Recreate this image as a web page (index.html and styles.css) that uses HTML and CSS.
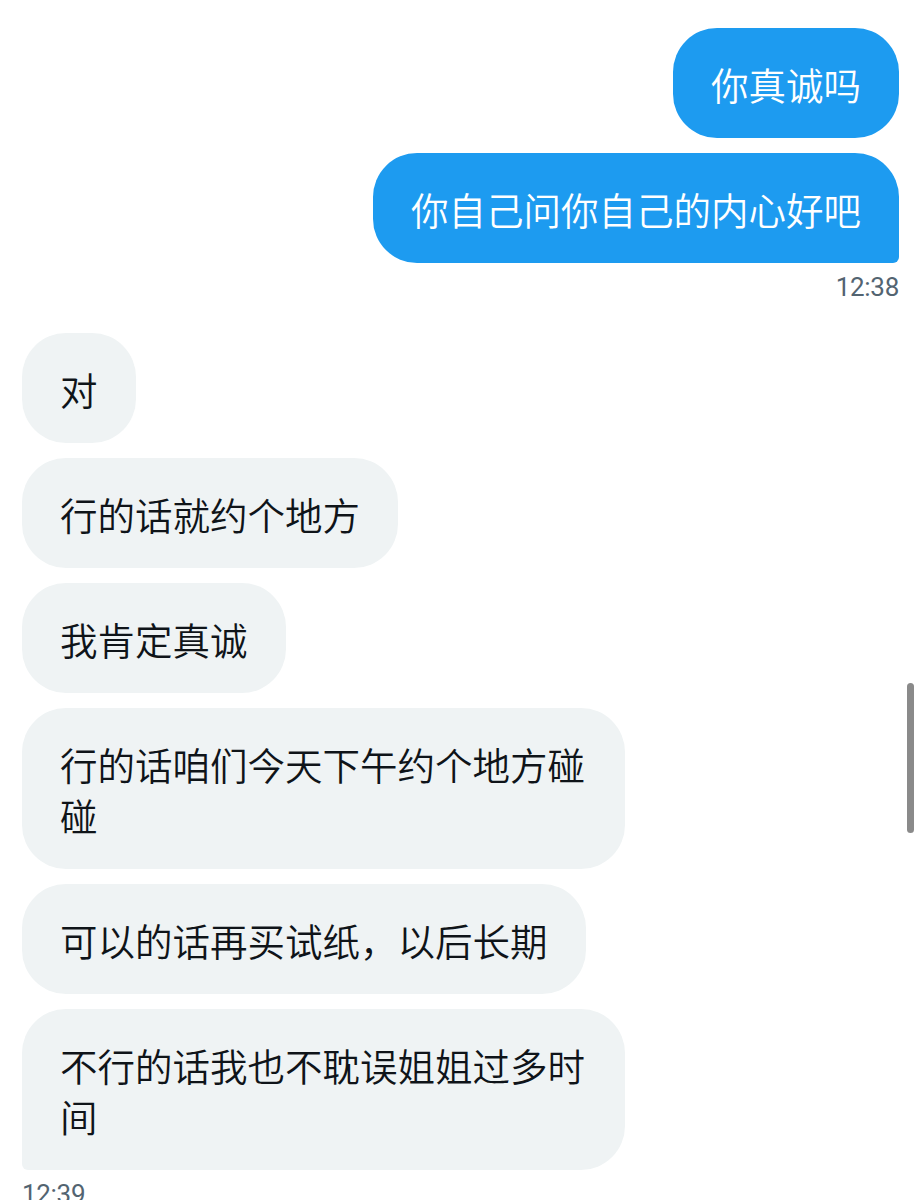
FILE: index.html
```html
<!DOCTYPE html>
<html>
	<head>
		<meta charset="UTF-8">
		<title>私信</title>
		<link rel="stylesheet" href="styles.css">
	</head>
	<body>
		<div class="chat">
			<div class="group out">
				<div class="bubble">你真诚吗</div>
				<div class="bubble">你自己问你自己的内心好吧</div>
				<div class="time">12:38</div>
			</div>
			<div class="group in">
				<div class="bubble">对</div>
				<div class="bubble">行的话就约个地方</div>
				<div class="bubble">我肯定真诚</div>
				<div class="bubble">行的话咱们今天下午约个地方碰碰</div>
				<div class="bubble">可以的话再买试纸，以后长期</div>
				<div class="bubble">不行的话我也不耽误姐姐过多时间</div>
				<div class="time">12:39</div>
			</div>
		</div>
		<div class="scrollbar"></div>
	</body>
</html>
```

FILE: styles.css
```css
*{
	margin:0;
	padding:0;
	box-sizing:border-box;
}
body{
	background:#fff;
	font-family:"Noto Sans CJK SC","Noto Sans",sans-serif;
	color:#0f1419;
	overflow:hidden;
}
.chat{
	padding:28px 22px 0;
}
.group{
	display:flex;
	flex-direction:column;
	gap:15px;
}
.out{
	align-items:flex-end;
	margin-bottom:31px;
}
.in{
	align-items:flex-start;
}
.bubble{
	max-width:603px;
	padding:29.5px 38px;
	font-size:37.5px;
	font-weight:350;
	line-height:51px;
	border-radius:44px;
}
.out .bubble{
	background:#1d9bf0;
	color:#fff;
}
.in .bubble{
	background:#eff3f4;
}
/* 一组消息的最后一条，尾角变方 */
.out .bubble:nth-last-child(2){
	border-bottom-right-radius:6px;
}
.in .bubble:nth-last-child(2){
	border-bottom-left-radius:6px;
}
.time{
	margin-top:-6px;
	font-family:Roboto,"Noto Sans",sans-serif;
	font-size:26px;
	line-height:30px;
	color:#536471;
	letter-spacing:-0.3px;
}
.scrollbar{
	position:fixed;
	right:7px;
	top:683px;
	width:7px;
	height:150px;
	border-radius:4px;
	background:#8a8a8a;
}
```
